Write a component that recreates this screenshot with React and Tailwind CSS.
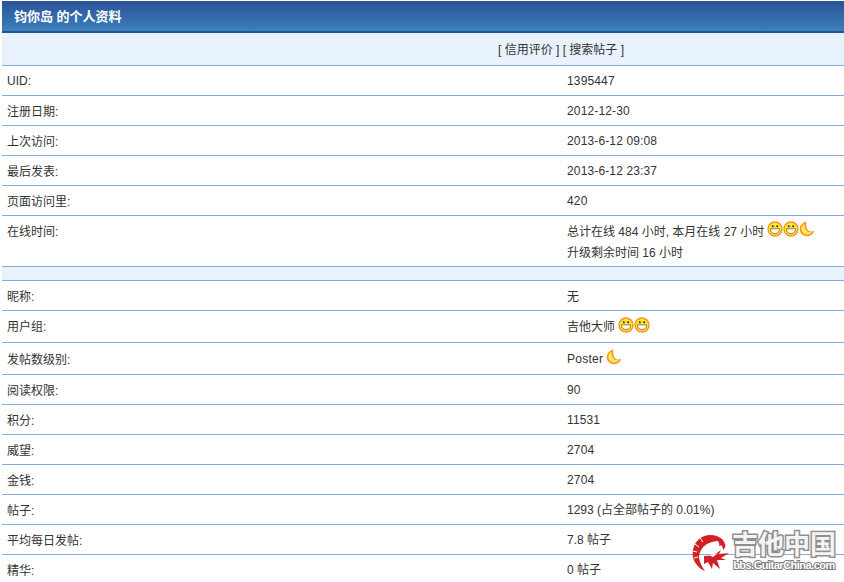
import React from 'react';

const rowsA = [
  ['UID:', '1395447', 'pl-[5px]'],
  ['注册日期:', '2012-12-30'],
  ['上次访问:', '2013-6-12 09:08'],
  ['最后发表:', '2013-6-12 23:37'],
  ['页面访问里:', '420'],
];

function Sun() {
  return (
    <svg width="16" height="16" viewBox="0 0 16 16" className="shrink-0">
      <circle cx="8" cy="8" r="7.700" fill="#f7941d" />
      <circle cx="8" cy="8" r="6.300" fill="#ffe23a" />
      <circle cx="5.800" cy="5.200" r="1" fill="#3a2a00" />
      <circle cx="10.200" cy="5.200" r="1" fill="#3a2a00" />
      <path d="M3.400 7.800h9.200c0 3.300-2.100 4.800-4.600 4.800s-4.600-1.500-4.600-4.800z" fill="#fff" stroke="#7a4a00" strokeWidth="0.700" />
    </svg>
  );
}

function Moon() {
  return (
    <svg width="16" height="16" viewBox="0 0 16 16" className="shrink-0">
      <path d="M7.500.5C2.800 1.500.2 5.200.8 9.300c.6 3.900 4.400 6.400 8.300 5.900 3.200-.4 5.700-2.900 6.500-6.200-1.600 1.800-4 2-5.600 1C7.800 8.600 6.600 4.400 7.500.5z" fill="#f59a1a" />
      <path d="M5.500 2.800C3 4.400 1.900 7 2.500 9.300c.7 2.800 3.600 4.600 6.400 4.200 1.800-.2 3.300-1.200 4.200-2.500-1.800.6-3.800.3-5-.7C6.200 8.600 5.300 5.600 5.500 2.800z" fill="#ffe66b" />
    </svg>
  );
}

function Row({ label, children, className = 'h-[30px]', align = 'items-center', labelClass = 'pl-[5px] pt-[2px]' }) {
  return (
    <div className={`grid grid-cols-[560px_1fr] border-b border-[#86aedb] ${className} ${align}`}>
      <div className={labelClass}>{label}</div>
      <div className="pl-[5px]">{children}</div>
    </div>
  );
}

function Logo() {
  return (
    <div className="absolute left-[690px] top-[531px] flex items-start">
      <svg width="42" height="44" viewBox="0 0 42 44" className="mt-[1px] shrink-0">
        {/* crescent body */}
        <path d="M33 8C27 2 15 1 8 8 1 15 1 27 7 33c2 3 5 5 8 6-3-4-5-8-6-13 0-6 3-11 8-14 4-2 8-3 11-3l2 4 3 1z" fill="#d32027" />
        {/* head curl */}
        <path d="M26 5c4 1 8 3 9 7 1 2 0 4-2 6l-1-5-3 1 1-4z" fill="#d32027" />
        {/* whiskers and tail */}
        <path d="M14 24c6 0 12-2 17-6l-2 4 10-1-8 5 5 2-9 0 3 9-7-6-1 6-4-7-4 2z" fill="#d32027" />
        <path d="M19 23l9-2-5 4z" fill="#fff" />
        <path d="M10 6l3 4M5 12l4 3M3 19l4 1M4 26l4-1" stroke="#fff" strokeWidth="1" />
      </svg>
      <div className="flex w-[104px] flex-col items-center leading-none">
        <span className="h-[28px] text-[26px] leading-[28px] font-bold text-[#f4f4f4] [paint-order:stroke_fill] [-webkit-text-stroke:3px_#8f8f8f]">吉他中国</span>
        <span className="h-[13px] whitespace-nowrap text-[11px] leading-[13px] font-bold tracking-[-0.5px] text-white [paint-order:stroke_fill] [-webkit-text-stroke:2px_#7d7d7d]">bbs.GuitarChina.com</span>
      </div>
    </div>
  );
}

export default function App() {
  return (
    <div className="relative h-[582px] w-[844px] overflow-hidden bg-white pl-[2px] pt-px text-[12px] leading-[18px] text-[#333] font-['Liberation_Sans','Noto_Sans_CJK_SC',sans-serif]">
      <div className="flex h-[32px] items-center border-b-2 border-[#1f5590] bg-gradient-to-b from-[#2b5298] to-[#3c80bb] pl-[12px] pt-px text-[13px] font-bold text-white">
        钧你岛 的个人资料
      </div>
      <div className="flex h-[33px] items-center border-b border-[#86a9d4] bg-[#e8f2fc] pl-[496px] pt-px">
        <span>[ 信用评价 ] [ 搜索帖子 ]</span>
      </div>

      {rowsA.map(([k, v, labelClass]) => (
        <Row key={k} label={k} labelClass={labelClass}><span className="tracking-[0.14px]">{v}</span></Row>
      ))}
      <Row label="在线时间:" className="h-[51px] pt-[6px]" align="items-start" labelClass="pl-[5px] pt-px">
        <div className="flex items-start pt-px">
          <span>总计在线 484 小时, 本月在线 27 小时</span>
          <span className="ml-[3px] -mt-[2px] flex"><Sun /><Sun /><Moon /></span>
        </div>
        <div className="mt-[3px]">升级剩余时间 16 小时</div>
      </Row>
      <div className="h-[14px] border-b border-[#86aedb] bg-[#e8f2fc]" />

      <Row label="昵称:"><span className="block pt-[2px]">无</span></Row>
      <Row label="用户组:" className="h-[32px]" labelClass="pl-[5px]">
        <div className="flex items-center pt-px">
          吉他大师
          <span className="ml-[3px] -mt-[5px] flex"><Sun /><Sun /></span>
        </div>
      </Row>
      <Row label="发帖数级别:" className="h-[32px]">
        <div className="flex items-center pt-px">
          <span className="tracking-[0.25px]">Poster</span>
          <span className="ml-[3px] -mt-[5px] flex"><Moon /></span>
        </div>
      </Row>
      <Row label="阅读权限:"><span className="tracking-[0.14px]">90</span></Row>
      <Row label="积分:"><span className="tracking-[0.14px]">11531</span></Row>
      <Row label="威望:"><span className="tracking-[0.14px]">2704</span></Row>
      <Row label="金钱:"><span className="tracking-[0.14px]">2704</span></Row>
      <Row label="帖子:">1293 (占全部帖子的 0.01%)</Row>
      <Row label="平均每日发帖:">7.8 帖子</Row>
      <Row label="精华:">0 帖子</Row>

      <Logo />
    </div>
  );
}
